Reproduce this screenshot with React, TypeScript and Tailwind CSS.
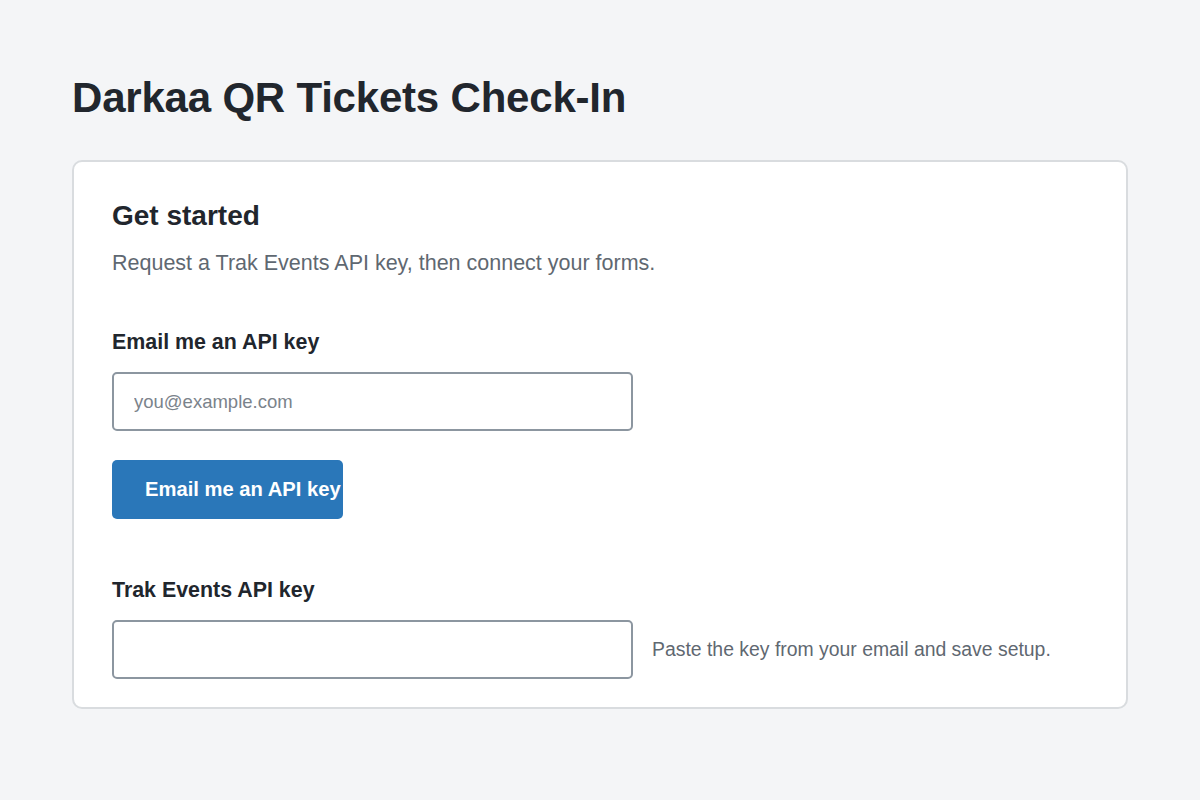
import * as React from 'react';

export default function App() {
  return (
    <div className="min-h-[800px] bg-[#f4f5f7] px-[72px] pt-[70px] font-['Liberation_Sans',Arial,sans-serif] text-[#21262d]">
      <h1 className="text-[42px] font-bold leading-[56px] tracking-[-0.2px]">Darkaa QR Tickets Check-In</h1>

      <div className="mt-[34px] rounded-[10px] border-2 border-[#d9dcdf] bg-white px-[38px] pt-[36px] pb-[28px]">
        <h2 className="text-[28px] font-bold leading-[36px]">Get started</h2>
        <p className="mt-[14px] text-[21.5px] leading-[30px] text-[#5f6871]">
          Request a Trak Events API key, then connect your forms.
        </p>

        <form onSubmit={(e) => e.preventDefault()} className="mt-[49px]">
          <label className="block text-[21.4px] font-bold leading-[30px]">Email me an API key</label>
          <input
            type="email"
            placeholder="you@example.com"
            className="mt-[15px] block h-[59px] w-[521px] rounded-[5px] border-2 border-[#8c96a0] bg-white px-[20px] text-[18.5px] text-[#21262d] placeholder:text-[#7b838b] focus:outline-none"
          />
          <button
            type="submit"
            className="mt-[29px] block h-[59px] w-[231px] whitespace-nowrap rounded-[5px] bg-[#2a77b9] pl-[33px] pr-0 text-left text-[20.2px] font-bold text-white"
          >
            Email me an API key
          </button>
        </form>

        <div className="mt-[56px]">
          <label className="block text-[21.4px] font-bold leading-[30px]">Trak Events API key</label>
          <div className="mt-[15px] flex items-center gap-[19px]">
            <input
              type="text"
              className="block h-[59px] w-[521px] rounded-[5px] border-2 border-[#8c96a0] bg-white px-[20px] text-[18.5px] focus:outline-none"
            />
            <span className="text-[19.4px] text-[#5f6871]">Paste the key from your email and save setup.</span>
          </div>
        </div>
      </div>
    </div>
  );
}
